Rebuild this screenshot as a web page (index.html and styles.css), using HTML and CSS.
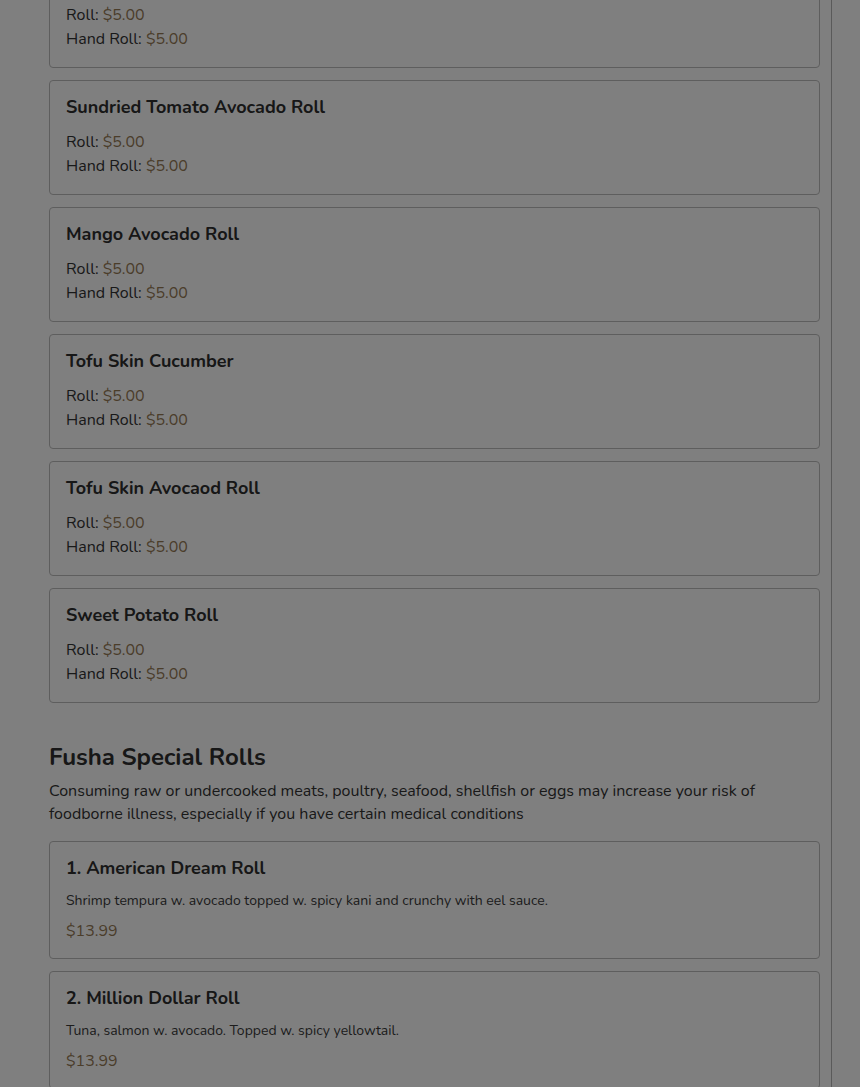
FILE: index.html
```html
<!DOCTYPE html>
<html lang="en">
<head>
<meta charset="utf-8">
<title>Menu</title>
<link rel="stylesheet" href="styles.css">
</head>
<body>
<div class="page">
  <main class="menu">
    <section class="section section-veg">
      <div class="card">
        <h3 class="card-title">Avocado Cucumber Roll</h3>
        <div class="line">Roll: <span class="price">$5.00</span></div>
        <div class="line">Hand Roll: <span class="price">$5.00</span></div>
      </div>
      <div class="card">
        <h3 class="card-title">Sundried Tomato Avocado Roll</h3>
        <div class="line">Roll: <span class="price">$5.00</span></div>
        <div class="line">Hand Roll: <span class="price">$5.00</span></div>
      </div>
      <div class="card">
        <h3 class="card-title">Mango Avocado Roll</h3>
        <div class="line">Roll: <span class="price">$5.00</span></div>
        <div class="line">Hand Roll: <span class="price">$5.00</span></div>
      </div>
      <div class="card">
        <h3 class="card-title">Tofu Skin Cucumber</h3>
        <div class="line">Roll: <span class="price">$5.00</span></div>
        <div class="line">Hand Roll: <span class="price">$5.00</span></div>
      </div>
      <div class="card">
        <h3 class="card-title">Tofu Skin Avocaod Roll</h3>
        <div class="line">Roll: <span class="price">$5.00</span></div>
        <div class="line">Hand Roll: <span class="price">$5.00</span></div>
      </div>
      <div class="card">
        <h3 class="card-title">Sweet Potato Roll</h3>
        <div class="line">Roll: <span class="price">$5.00</span></div>
        <div class="line">Hand Roll: <span class="price">$5.00</span></div>
      </div>
    </section>

    <section class="section">
      <h2 class="section-title">Fusha Special Rolls</h2>
      <p class="section-note">Consuming raw or undercooked meats, poultry, seafood, shellfish or eggs may increase your risk of foodborne illness, especially if you have certain medical conditions</p>
      <div class="card card-special">
        <h3 class="special-title">1. American Dream Roll</h3>
        <p class="desc">Shrimp tempura w. avocado topped w. spicy kani and crunchy with eel sauce.</p>
        <div class="special-price">$13.99</div>
      </div>
      <div class="card card-special">
        <h3 class="special-title">2. Million Dollar Roll</h3>
        <p class="desc">Tuna, salmon w. avocado. Topped w. spicy yellowtail.</p>
        <div class="special-price">$13.99</div>
      </div>
      <div class="card card-special">
        <h3 class="special-title">3. Crazy Roll</h3>
        <p class="desc">Spicy tuna, avocado, cucumber topped w. salmon and tuna.</p>
        <div class="special-price">$13.99</div>
      </div>
    </section>
  </main>
</div>
<div class="backdrop"></div>
</body>
</html>
```

FILE: styles.css
```css
* {
  box-sizing: border-box;
}

html, body {
  margin: 0;
  padding: 0;
  background: #ffffff;
  overflow: hidden;
}

body {
  font-family: "Nunito", Lato, "Open Sans", sans-serif;
  color: #333333;
}

.page {
  width: 832px;
  min-height: 1087px;
  padding: 0 11px 0 49px;
  border-right: 1px solid #b4b4b4;
}

.menu {
  margin-top: -47px;
}

.card {
  border: 1px solid #bcbcbc;
  border-radius: 4px;
  padding: 16px;
  margin-bottom: 12px;
  background: #ffffff;
}

.card-special {
  padding-bottom: 15px;
}

.card-title {
  margin: 0 0 13px 0;
  font-size: 18px;
  line-height: 20px;
  font-weight: 700;
  color: #2e2e2e;
}

.line {
  font-size: 16px;
  line-height: 24px;
  color: #333333;
}

.price {
  color: #967a55;
}

.section-title {
  margin: 40px 0 8px 0;
  font-size: 24px;
  line-height: 29px;
  font-weight: 700;
  color: #2e2e2e;
}

.section-note {
  margin: 0 0 15px 0;
  font-size: 16px;
  line-height: 23px;
  color: #333333;
}

.special-title {
  margin: 0 0 14px 0;
  font-size: 18px;
  line-height: 20px;
  font-weight: 700;
  color: #2e2e2e;
}

.desc {
  margin: 0 0 9px 0;
  font-size: 14px;
  line-height: 18px;
  color: #3a3a3a;
}

.special-price {
  font-size: 16px;
  line-height: 24px;
  color: #967a55;
}

.backdrop {
  position: fixed;
  inset: 0;
  background: rgba(0, 0, 0, 0.5);
}
```
